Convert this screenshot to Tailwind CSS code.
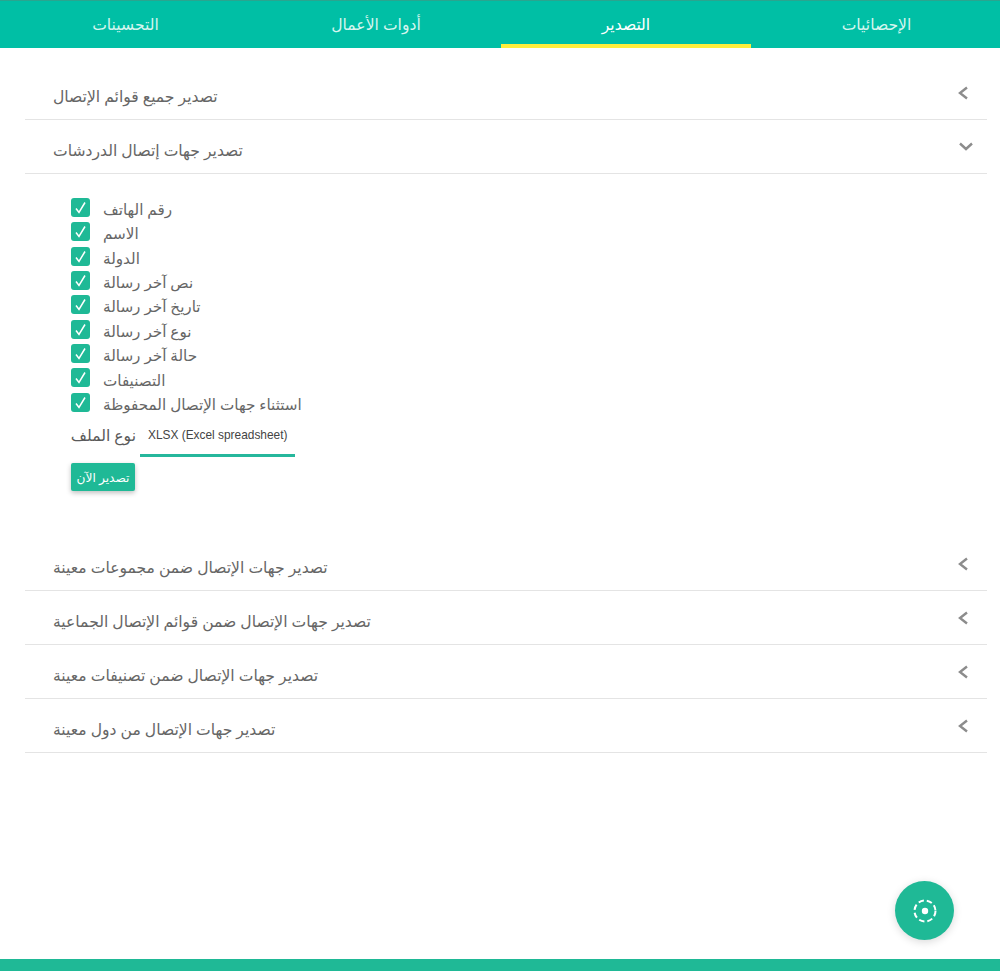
<!DOCTYPE html>
<html lang="ar">
<head>
<meta charset="utf-8">
<script src="https://cdn.jsdelivr.net/npm/@tailwindcss/browser@4"></script>
</head>
<body class="bg-white font-['Noto_Sans','DejaVu_Sans',sans-serif]">
<div class="relative h-[971px] w-[1000px] overflow-hidden flex flex-col">
  <nav class="flex h-[48px] flex-row-reverse bg-[#00bfa5] border-t border-[#2aa58f] text-[15.6px] text-[#d6f5ef]">
    <div class="flex w-[249px] items-center justify-center pl-[2px] pt-[1px]">الإحصائيات</div>
    <div class="flex w-[250px] items-center justify-center border-b-[4px] border-[#ffee3b] pt-[5px] text-white">التصدير</div>
    <div class="flex w-[250px] items-center justify-center pt-[1px]">أدوات الأعمال</div>
    <div class="flex w-[251px] items-center justify-center pt-[1px]">التحسينات</div>
  </nav>

  <div class="ml-[25px] mr-[13px] mt-[18px] text-[15.6px] text-[#666]">
    <div class="flex h-[54px] items-center justify-between border-b border-[#e4e4e4] pl-[28px] pr-[17px]">
      <span dir="rtl" class="pt-[9px]">تصدير جميع قوائم الإتصال</span>
      <svg class="mb-[-1px]" width="14" height="14" viewBox="0 0 14 14" fill="none" stroke="#8c8c8c" stroke-width="2.4"><path d="M11 1.5 4 7l7 5.5"/></svg>
    </div>
    <div class="flex h-[54px] items-center justify-between border-b border-[#e4e4e4] pl-[28px] pr-[13px]">
      <span dir="rtl" class="pt-[9px]">تصدير جهات إتصال الدردشات</span>
      <svg class="mb-[-1px]" width="16" height="14" viewBox="0 0 16 14" fill="none" stroke="#8c8c8c" stroke-width="2.4"><path d="M2 3.5l6 5.5 6-5.5"/></svg>
    </div>

    <div class="h-[363px] pl-[46px] pt-[24px]">
      <div class="flex flex-col gap-[5.35px] text-[15.2px]">
        <label class="flex h-[19px] items-center gap-[13px]"><span class="flex size-[19px] items-center justify-center rounded-[3px] bg-[#1fb996]"><svg width="13" height="13" viewBox="0 0 13 13" fill="none" stroke="#fff" stroke-width="1.5"><path d="M2 7.5 5 11.5 11 1.5"/></svg></span><span dir="rtl" class="pt-[4px]">رقم الهاتف</span></label>
        <label class="flex h-[19px] items-center gap-[13px]"><span class="flex size-[19px] items-center justify-center rounded-[3px] bg-[#1fb996]"><svg width="13" height="13" viewBox="0 0 13 13" fill="none" stroke="#fff" stroke-width="1.5"><path d="M2 7.5 5 11.5 11 1.5"/></svg></span><span dir="rtl" class="pt-[4px]">الاسم</span></label>
        <label class="flex h-[19px] items-center gap-[13px]"><span class="flex size-[19px] items-center justify-center rounded-[3px] bg-[#1fb996]"><svg width="13" height="13" viewBox="0 0 13 13" fill="none" stroke="#fff" stroke-width="1.5"><path d="M2 7.5 5 11.5 11 1.5"/></svg></span><span dir="rtl" class="pt-[4px]">الدولة</span></label>
        <label class="flex h-[19px] items-center gap-[13px]"><span class="flex size-[19px] items-center justify-center rounded-[3px] bg-[#1fb996]"><svg width="13" height="13" viewBox="0 0 13 13" fill="none" stroke="#fff" stroke-width="1.5"><path d="M2 7.5 5 11.5 11 1.5"/></svg></span><span dir="rtl" class="pt-[4px]">نص آخر رسالة</span></label>
        <label class="flex h-[19px] items-center gap-[13px]"><span class="flex size-[19px] items-center justify-center rounded-[3px] bg-[#1fb996]"><svg width="13" height="13" viewBox="0 0 13 13" fill="none" stroke="#fff" stroke-width="1.5"><path d="M2 7.5 5 11.5 11 1.5"/></svg></span><span dir="rtl" class="pt-[4px]">تاريخ آخر رسالة</span></label>
        <label class="flex h-[19px] items-center gap-[13px]"><span class="flex size-[19px] items-center justify-center rounded-[3px] bg-[#1fb996]"><svg width="13" height="13" viewBox="0 0 13 13" fill="none" stroke="#fff" stroke-width="1.5"><path d="M2 7.5 5 11.5 11 1.5"/></svg></span><span dir="rtl" class="pt-[4px]">نوع آخر رسالة</span></label>
        <label class="flex h-[19px] items-center gap-[13px]"><span class="flex size-[19px] items-center justify-center rounded-[3px] bg-[#1fb996]"><svg width="13" height="13" viewBox="0 0 13 13" fill="none" stroke="#fff" stroke-width="1.5"><path d="M2 7.5 5 11.5 11 1.5"/></svg></span><span dir="rtl" class="pt-[4px]">حالة آخر رسالة</span></label>
        <label class="flex h-[19px] items-center gap-[13px]"><span class="flex size-[19px] items-center justify-center rounded-[3px] bg-[#1fb996]"><svg width="13" height="13" viewBox="0 0 13 13" fill="none" stroke="#fff" stroke-width="1.5"><path d="M2 7.5 5 11.5 11 1.5"/></svg></span><span dir="rtl" class="pt-[4px]">التصنيفات</span></label>
        <label class="flex h-[19px] items-center gap-[13px]"><span class="flex size-[19px] items-center justify-center rounded-[3px] bg-[#1fb996]"><svg width="13" height="13" viewBox="0 0 13 13" fill="none" stroke="#fff" stroke-width="1.5"><path d="M2 7.5 5 11.5 11 1.5"/></svg></span><span dir="rtl" class="pt-[4px]">استثناء جهات الإتصال المحفوظة</span></label>
      </div>
      <div class="mt-[11px] flex h-[38px] items-start">
        <span dir="rtl" class="mr-[4px] w-[65px] pt-[1px] whitespace-nowrap text-[#5a5a5a]">نوع الملف</span>
        <div class="h-[34px] w-[155px] border-b-[3px] border-[#26b79c] pl-[8px] pt-[4px] font-['Liberation_Sans',sans-serif] text-[11.9px] text-[#444]">XLSX (Excel spreadsheet)</div>
      </div>
      <button dir="rtl" class="mt-[2px] flex h-[28px] w-[64px] items-center justify-center rounded-[2px] bg-[#1fb996] pt-[2px] text-[12.2px] text-white shadow-[0_2px_5px_rgba(0,0,0,0.25)]">تصدير الآن</button>
    </div>

    <div class="flex h-[54px] items-center justify-between border-b border-[#e4e4e4] pl-[28px] pr-[17px]">
      <span dir="rtl" class="pt-[9px]">تصدير جهات الإتصال ضمن مجموعات معينة</span>
      <svg class="mb-[-1px]" width="14" height="14" viewBox="0 0 14 14" fill="none" stroke="#8c8c8c" stroke-width="2.4"><path d="M11 1.5 4 7l7 5.5"/></svg>
    </div>
    <div class="flex h-[54px] items-center justify-between border-b border-[#e4e4e4] pl-[28px] pr-[17px]">
      <span dir="rtl" class="pt-[9px]">تصدير جهات الإتصال ضمن قوائم الإتصال الجماعية</span>
      <svg class="mb-[-1px]" width="14" height="14" viewBox="0 0 14 14" fill="none" stroke="#8c8c8c" stroke-width="2.4"><path d="M11 1.5 4 7l7 5.5"/></svg>
    </div>
    <div class="flex h-[54px] items-center justify-between border-b border-[#e4e4e4] pl-[28px] pr-[17px]">
      <span dir="rtl" class="pt-[9px]">تصدير جهات الإتصال ضمن تصنيفات معينة</span>
      <svg class="mb-[-1px]" width="14" height="14" viewBox="0 0 14 14" fill="none" stroke="#8c8c8c" stroke-width="2.4"><path d="M11 1.5 4 7l7 5.5"/></svg>
    </div>
    <div class="flex h-[54px] items-center justify-between border-b border-[#e4e4e4] pl-[28px] pr-[17px]">
      <span dir="rtl" class="pt-[9px]">تصدير جهات الإتصال من دول معينة</span>
      <svg class="mb-[-1px]" width="14" height="14" viewBox="0 0 14 14" fill="none" stroke="#8c8c8c" stroke-width="2.4"><path d="M11 1.5 4 7l7 5.5"/></svg>
    </div>
  </div>

  <button class="absolute left-[895px] top-[881px] flex size-[59px] items-center justify-center rounded-full bg-[#1fb996] shadow-[0_2px_8px_rgba(0,0,0,0.15)]">
    <svg width="26" height="26" viewBox="0 0 26 26" fill="none"><circle cx="13" cy="13" r="10.5" stroke="#fff" stroke-width="2" stroke-dasharray="5.5 3" /><circle cx="13" cy="13" r="3.2" fill="#fff"/></svg>
  </button>
  <div class="absolute bottom-0 left-0 h-[12px] w-full bg-[#1fb996]"></div>
</div>
</body>
</html>
